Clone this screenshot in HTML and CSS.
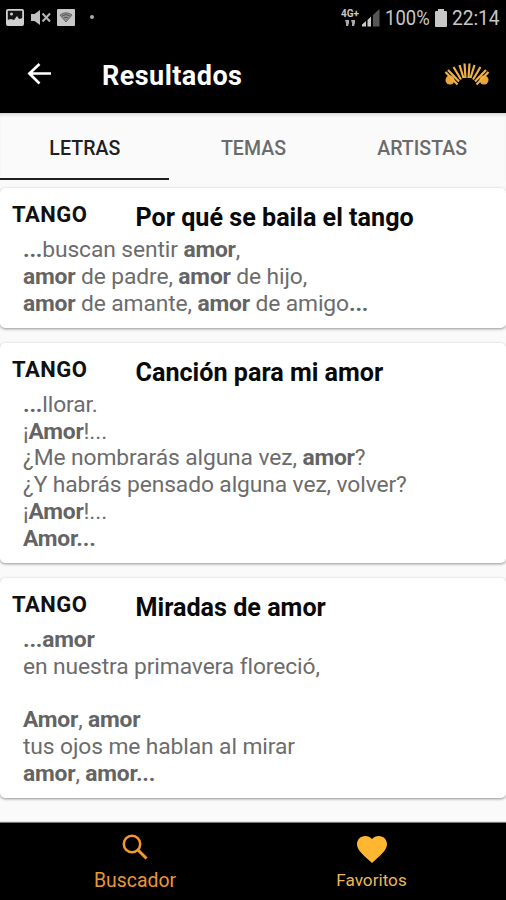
FILE: index.html
```html
<!DOCTYPE html>
<html lang="es">
<head>
<meta charset="utf-8">
<title>Resultados</title>
<link rel="stylesheet" href="styles.css">
</head>
<body>
<div class="status">
  <div class="status-left">
    <svg class="ic-photo" width="18" height="17" viewBox="0 0 18 17"><rect x=".9" y=".9" width="16.200" height="15.200" rx="1" fill="#151515" stroke="#d0d0d0" stroke-width="1.800"/><path d="M1 16V11l4-1 3 1 3-4 2 3 4-1v7z" fill="#d0d0d0"/><circle cx="5.500" cy="5" r="1.500" fill="#d0d0d0"/></svg>
    <svg class="ic-mute" width="20" height="17" viewBox="0 0 20 17"><path d="M0 5h3.500L9 1v15l-5.500-4H0z" fill="#c2c2c2"/><path d="M11.500 4.500l7.500 8M19 4.500l-7.500 8" stroke="#b5b5b5" stroke-width="2"/></svg>
    <svg class="ic-wifi" width="18" height="17" viewBox="0 0 18 17"><rect width="18" height="17" rx="1" fill="#c8c8c8"/><path d="M3 6Q9 1.500 15 6L9 13Z" fill="#929292" stroke="#666" stroke-width="1"/><path d="M5 7q4-3 8 0M7 9q2-1.500 4 0" fill="none" stroke="#555"/></svg>
    <span class="dot"></span>
  </div>
  <div class="status-right">
    <div class="net"><span>4G+</span><svg width="10" height="6" viewBox="0 0 10 6"><path d="M0 0h4v3L3 6H1V3zM6 0h4v3L9 6H7V3z" fill="#aaa"/></svg></div>
    <svg class="ic-signal" width="18" height="18" viewBox="0 0 18 18"><path d="M0 17.500v-2l4-3.500v5.500zM5.500 17.500V11L9 7.500v10z" fill="#c8c8c8"/><path d="M11 17.500V6l6.500-6v17.500z" fill="#555"/></svg>
    <span class="battery-text">100%</span>
    <svg class="ic-battery" width="12" height="18" viewBox="0 0 12 18"><path d="M3 0h6v2h2q1 0 1 1v14q0 1-1 1H1q-1 0-1-1V3q0-1 1-1h2z" fill="#c8c8c8"/></svg>
    <span class="clock">22:14</span>
  </div>
</div>
<header class="appbar">
  <svg class="back" width="25" height="24" viewBox="0 0 25 24"><path d="M12.500 2 2.400 11.500 12.500 21.500M2.500 11.500H24" fill="none" stroke="#fff" stroke-width="2.700"/></svg>
  <h1>Resultados</h1>
  <svg class="logo" width="46" height="24" viewBox="0 0 46 24">
    <g fill="#e9a637"><circle cx="6" cy="17" r="4.500"/><circle cx="40" cy="17" r="4.500"/></g>
    <g stroke="#efb048" stroke-width="2.200" fill="none"><path d="M1.500 9 13.500 21.500M4 7 15 18.500M9.500 4 17 16.500M15.500 2 19.500 15M20.500 .5 21.500 15M25.500 .5 24.500 15M30.500 2 26.500 15M36.500 4 29 16.500M42 7 31 18.500M44.500 9 32.500 21.500"/></g>
  </svg>
</header>
<nav class="tabs">
  <div class="tab active">LETRAS</div>
  <div class="tab">TEMAS</div>
  <div class="tab">ARTISTAS</div>
</nav>
<main class="results">
  <article class="card">
    <div class="head"><span class="genre">TANGO</span><h2>Por qué se baila el tango</h2></div>
    <p><b>...</b>buscan sentir <b>amor</b>,<br><b>amor</b> de padre, <b>amor</b> de hijo,<br><b>amor</b> de amante, <b>amor</b> de amigo<b>...</b></p>
  </article>
  <article class="card">
    <div class="head"><span class="genre">TANGO</span><h2>Canción para mi amor</h2></div>
    <p><b>...</b>llorar.<br>¡<b>Amor</b>!...<br>¿Me nombrarás alguna vez, <b>amor</b>?<br>¿Y habrás pensado alguna vez, volver?<br>¡<b>Amor</b>!...<br><b>Amor...</b></p>
  </article>
  <article class="card">
    <div class="head"><span class="genre">TANGO</span><h2>Miradas de amor</h2></div>
    <p><b>...amor</b><br>en nuestra primavera floreció,<br><br><b>Amor</b>, <b>amor</b><br>tus ojos me hablan al mirar<br><b>amor</b>, <b>amor...</b></p>
  </article>
</main>
<footer class="bottom">
  <div class="item search">
    <svg width="26" height="26" viewBox="0 0 26 26"><circle cx="10" cy="10" r="8.200" fill="none" stroke="#f49a2c" stroke-width="2.500"/><path d="M15.500 15.500 24.500 24.500" stroke="#f49a2c" stroke-width="3"/></svg>
    <span>Buscador</span>
  </div>
  <div class="item fav">
    <svg width="30" height="27" viewBox="2 3 20 18.350" preserveAspectRatio="none"><path d="M12 21.350l-1.450-1.320C5.400 15.360 2 12.280 2 8.500 2 5.420 4.420 3 7.500 3c1.740 0 3.410.81 4.500 2.090C13.090 3.810 14.760 3 16.500 3 19.580 3 22 5.420 22 8.500c0 3.780-3.400 6.860-8.550 11.540L12 21.350z" fill="#ffb631"/></svg>
    <span>Favoritos</span>
  </div>
</footer>
</body>
</html>
```
FILE: styles.css
```css
* { box-sizing: border-box; }
body { margin: 0; width: 506px; height: 900px; overflow: hidden; display: flex; flex-direction: column; background: #fafafa; font-family: Roboto, "Liberation Sans", sans-serif; }
h1, h2, p { margin: 0; }
svg { display: block; flex: none; }
.status { height: 36px; flex: none; background: #000; display: flex; justify-content: space-between; color: #c8c8c8; }
.status-left { display: flex; padding: 9px 0 0 6px; }
.ic-mute { margin-left: 7px; }
.ic-wifi { margin-left: 6px; }
.dot { width: 4px; height: 4px; border-radius: 50%; background: #aaa; margin: 6px 0 0 15px; }
.status-right { display: flex; padding: 9px 7px 0 0; font-size: 21px; line-height: 18px; }
.net { width: 18px; font-size: 10px; line-height: 10px; font-weight: 700; display: flex; flex-direction: column; align-items: center; }
.net svg { margin-top: 1px; }
.ic-signal { margin-left: 3px; }
.battery-text { margin-left: 5px; width: 45px; white-space: nowrap; transform: scaleX(.88); transform-origin: left; }
.ic-battery { margin-left: 5px; }
.clock { margin-left: 5px; width: 47px; white-space: nowrap; transform: scaleX(.91); transform-origin: left; }
.appbar { height: 77px; flex: none; background: #000; color: #fff; display: flex; align-items: center; padding: 0 16px 0 27px; }
.back { margin-bottom: 2px; }
h1 { font-size: 27px; line-height: 32px; font-weight: 700; letter-spacing: .45px; margin-left: 50px; flex: 1; padding-top: 2px; }
.tabs { height: 68px; flex: none; display: grid; grid-template-columns: repeat(3, 1fr); box-shadow: inset 0 4px 4px -3px #c5c5c5; }
.tab { height: 68px; font-size: 19.500px; line-height: 71px; font-weight: 500; color: #6b6b6b; text-align: center; letter-spacing: .05px; padding-left: 1px; }
.active { height: 67px; color: #202020; border-bottom: 2px solid #202020; }
.results { flex: 1; padding-top: 6.800px; display: flex; flex-direction: column; gap: 14.200px; overflow: hidden; }
.card { background: #fff; border-radius: 5px; padding: 14px 12px 11.100px; box-shadow: 0 1px 3px rgba(0,0,0,.42); flex: none; }
.head { height: 35.300px; display: flex; }
.genre { width: 123.500px; font-size: 22px; line-height: 26px; font-weight: 700; letter-spacing: .5px; color: #111; }
h2 { font-size: 25.150px; line-height: 32px; font-weight: 700; color: #090909; white-space: nowrap; }
.card p { padding-left: 11px; font-size: 22.800px; line-height: 26.730px; letter-spacing: -.1px; color: #6c6c6c; white-space: nowrap; }
.card b { font-weight: 700; color: #646464; letter-spacing: -.2px; }
.bottom { height: 77px; flex: none; background: #000; display: flex; justify-content: center; box-shadow: 0 -1px 1px #777; }
.item { width: 237px; display: flex; flex-direction: column; align-items: center; }
.search { padding-top: 11px; color: #e8973a; font-size: 19.400px; line-height: 24px; }
.search span { margin: 9px 0 0 1px; }
.fav { padding-top: 13px; color: #eab757; font-size: 17.200px; line-height: 22px; }
.fav span { margin-top: 6px; }
```
